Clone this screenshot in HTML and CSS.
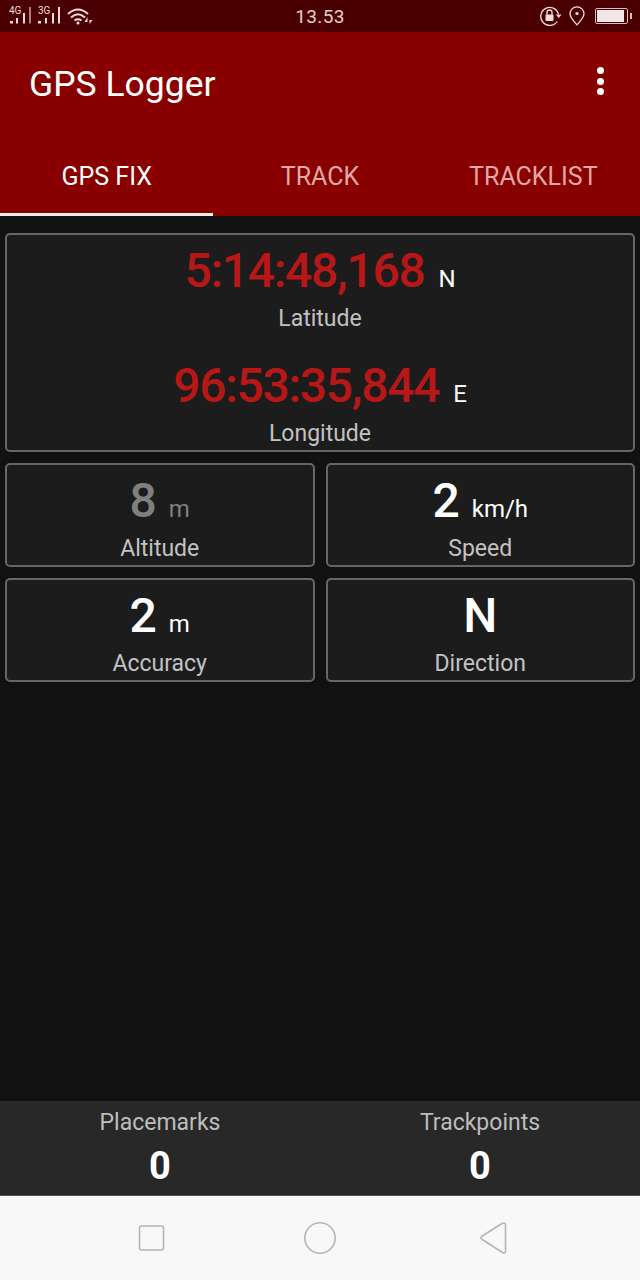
FILE: index.html
```html
<!DOCTYPE html>
<html lang="en">
<head>
  <meta charset="UTF-8" />
  <meta name="viewport" content="width=device-width, initial-scale=1" />
  <title>GPS Logger</title>
  <link rel="stylesheet" href="styles.css">
</head>
<body>
  <div class="status-bar">
    <div class="status-left">
      <svg width="24" height="32" viewBox="0 0 24 32">
        <text x="0" y="13.5" class="net">4G</text>
        <rect x="1" y="21" width="3" height="2.5" fill="#f1dcdc"/>
        <rect x="7" y="18" width="2" height="5.5" fill="#f1dcdc"/>
        <rect x="14" y="13" width="2" height="10.5" fill="#f1dcdc"/>
        <rect x="20" y="7" width="2" height="16.5" fill="#a98080"/>
      </svg>
      <svg width="24" height="32" viewBox="0 0 24 32">
        <text x="0" y="13.5" class="net">3G</text>
        <rect x="0" y="21" width="3" height="2.5" fill="#f1dcdc"/>
        <rect x="7" y="18" width="2" height="5.5" fill="#f1dcdc"/>
        <rect x="14" y="13" width="2" height="10.5" fill="#f1dcdc"/>
        <rect x="20" y="7" width="2" height="16.5" fill="#f1dcdc"/>
      </svg>
      <svg width="26" height="32" viewBox="0 0 26 32" fill="none" stroke="#f1dcdc" stroke-width="2">
        <path d="M1 14 Q11 5 21 14"/>
        <path d="M4 17.5 Q11 11 18 17.5"/>
        <path d="M7.5 20.5 Q11 18 14.5 20.5"/>
        <circle cx="11" cy="23" r="1.5" fill="#f1dcdc" stroke="none"/>
        <path d="M20.5 17 L17.5 22 H20.5 V24 Z M22.5 15 V20 H25.5 L22.5 24 Z" fill="#f1dcdc" stroke="none"/>
      </svg>
    </div>
    <div class="clock">13.53</div>
    <div class="status-right">
      <svg width="22" height="20" viewBox="0 0 22 20" fill="none" stroke="#f1dcdc" stroke-width="1.3">
        <path d="M17.2 15.5 A9 9 0 1 1 18.4 8"/>
        <path d="M15.8 8.5 H21.5 L18.7 12 Z" fill="#f1dcdc" stroke="none"/>
        <rect x="5.5" y="8.5" width="8" height="6.5" rx="1" fill="#f1dcdc" stroke="none"/>
        <path d="M7 9 V6.5 A2.5 2.5 0 0 1 12 6.5 V9"/>
      </svg>
      <svg width="16" height="20" viewBox="0 0 16 20" fill="none" stroke="#f1dcdc" stroke-width="1.3">
        <path d="M8 18.8 C4 14.5 1 11.5 1 7.8 A7 7 0 0 1 15 7.8 C15 11.5 12 14.5 8 18.8 Z"/>
        <circle cx="8" cy="7.5" r="1.6" fill="#f1dcdc" stroke="none"/>
      </svg>
      <div class="battery"><div class="battery-level"></div><div class="battery-end"></div></div>
    </div>
  </div>

  <header class="app-bar">
    <div class="toolbar">
      <h1>GPS Logger</h1>
      <div class="menu"><span></span><span></span><span></span></div>
    </div>
    <nav class="tabs">
      <div class="tab active">GPS FIX</div>
      <div class="tab">TRACK</div>
      <div class="tab">TRACKLIST</div>
    </nav>
  </header>

  <main class="content">
    <section class="card wide">
      <div class="reading">
        <div class="value red"><span class="big">5:14:48,168</span><span class="unit">N</span></div>
        <div class="label">Latitude</div>
      </div>
      <div class="reading">
        <div class="value red"><span class="big">96:53:35,844</span><span class="unit">E</span></div>
        <div class="label">Longitude</div>
      </div>
    </section>
    <section class="card">
      <div class="value grey"><span class="big">8</span><span class="unit">m</span></div>
      <div class="label">Altitude</div>
    </section>
    <section class="card">
      <div class="value"><span class="big">2</span><span class="unit">km/h</span></div>
      <div class="label">Speed</div>
    </section>
    <section class="card">
      <div class="value"><span class="big">2</span><span class="unit">m</span></div>
      <div class="label">Accuracy</div>
    </section>
    <section class="card">
      <div class="value"><span class="big">N</span></div>
      <div class="label">Direction</div>
    </section>
  </main>

  <div class="counters">
    <div class="counter"><div class="counter-label">Placemarks</div><div class="counter-value">0</div></div>
    <div class="counter"><div class="counter-label">Trackpoints</div><div class="counter-value">0</div></div>
  </div>

  <div class="nav-bar">
    <svg class="nav-square" width="28" height="28" viewBox="0 0 28 28" fill="none" stroke="#b5b5b5" stroke-width="1.6">
      <rect x="1.5" y="2" width="24" height="24" rx="2"/>
    </svg>
    <svg width="34" height="34" viewBox="0 0 34 34" fill="none" stroke="#b5b5b5" stroke-width="1.6">
      <circle cx="17" cy="17" r="15.2"/>
    </svg>
    <svg class="nav-back" width="30" height="34" viewBox="0 0 30 34" fill="none" stroke="#b5b5b5" stroke-width="1.6" stroke-linejoin="round">
      <path d="M2.5 15.5 L23 2.5 Q26.5 1 26.5 4 V30 Q26.5 33 23.5 31.5 L2.5 18 Q1 16.8 2.5 15.5 Z"/>
    </svg>
  </div>
</body>
</html>
```

FILE: styles.css
```css
* {
  box-sizing: border-box;
}
body {
  margin: 0;
  width: 640px;
  height: 1280px;
  display: flex;
  flex-direction: column;
  font-family: 'Roboto', sans-serif;
  background-color: #111;
  color: #fff;
  overflow: hidden;
}
.status-bar {
  height: 32px;
  background-color: #4a0000;
  display: grid;
  grid-template-columns: 1fr auto 1fr;
  align-items: center;
  padding: 0 9px;
}
.status-left {
  display: flex;
  align-items: center;
  gap: 5px;
}
.net {
  font-family: 'Roboto', sans-serif;
  font-size: 10px;
  fill: #f1dcdc;
}
.clock {
  font-size: 19px;
  letter-spacing: 0.4px;
  color: #e4cccc;
}
.status-right {
  display: flex;
  align-items: center;
  justify-content: flex-end;
  gap: 7px;
}
.battery {
  width: 33px;
  height: 16px;
  margin-left: 3px;
  margin-right: 3px;
  border: 1.5px solid #d9bcbc;
  border-radius: 2px;
  padding: 1px 3px 1px 1px;
  position: relative;
}
.battery-level {
  width: 100%;
  height: 100%;
  background-color: #f3e6e6;
}
.battery-end {
  position: absolute;
  right: -4.5px;
  top: 3.5px;
  width: 2px;
  height: 6px;
  background-color: #d9bcbc;
}
.app-bar {
  height: 184px;
  background-color: #880000;
  display: flex;
  flex-direction: column;
}
.toolbar {
  height: 104px;
  display: flex;
  align-items: center;
  justify-content: space-between;
  padding: 0 36px 0 29px;
}
h1 {
  margin: 0;
  font-size: 35.5px;
  font-weight: 400;
  color: #fff;
}
.menu {
  display: flex;
  flex-direction: column;
  gap: 3.5px;
  margin-bottom: 6px;
}
.menu span {
  width: 7px;
  height: 7px;
  border-radius: 50%;
  background-color: #fff;
}
.tabs {
  flex: 1;
  display: grid;
  grid-template-columns: repeat(3, 1fr);
}
.tab {
  display: flex;
  align-items: center;
  justify-content: center;
  padding-top: 3px;
  font-size: 25px;
  color: #e0a8a8;
  border-bottom: 3px solid transparent;
}
.tab.active {
  color: #fff;
  border-bottom-color: #f1ece6;
}
.content {
  flex: 1;
  display: grid;
  grid-template-columns: 1fr 1fr;
  grid-auto-rows: 104px;
  align-content: start;
  gap: 11px;
  padding: 17px 5px 0 5px;
}
.card {
  background-color: #1c1c1c;
  border: 2px solid #666;
  border-radius: 5px;
  display: flex;
  flex-direction: column;
  align-items: center;
  padding-top: 4px;
}
.card.wide {
  grid-column: 1 / 3;
  grid-row: span 2;
}
.reading {
  height: 115px;
  flex-shrink: 0;
  display: flex;
  flex-direction: column;
  align-items: center;
}
.value {
  display: flex;
  align-items: baseline;
  justify-content: center;
  height: 64px;
  line-height: 64px;
}
.big {
  font-size: 48px;
  color: #fff;
  font-weight: 500;
}
.unit {
  font-size: 24px;
  margin-left: 12px;
  color: #fff;
}
.red .big {
  color: #b71717;
  letter-spacing: -1.3px;
}
.red .unit {
  margin-left: 14px;
}
.grey .big,
.grey .unit {
  color: #7f7f7f;
}
.label {
  font-size: 23px;
  color: #c2c2c2;
  line-height: 28px;
  margin-top: 2px;
}
.counters {
  height: 94px;
  background-color: #282828;
  display: grid;
  grid-template-columns: 1fr 1fr;
}
.counter {
  text-align: center;
}
.counter-label {
  font-size: 23px;
  line-height: 28px;
  margin-top: 8px;
  color: #bdbdbd;
}
.counter-value {
  font-size: 38px;
  font-weight: 700;
  line-height: 44px;
  margin-top: 7px;
}
.nav-bar {
  height: 85px;
  background-color: #f8f8f8;
  border-top: 1px solid #555;
  display: grid;
  grid-template-columns: repeat(3, 171px);
  justify-content: center;
  justify-items: center;
  align-items: center;
}
.nav-square {
  margin-left: 6px;
}
.nav-back {
  margin-left: 5px;
}
```
